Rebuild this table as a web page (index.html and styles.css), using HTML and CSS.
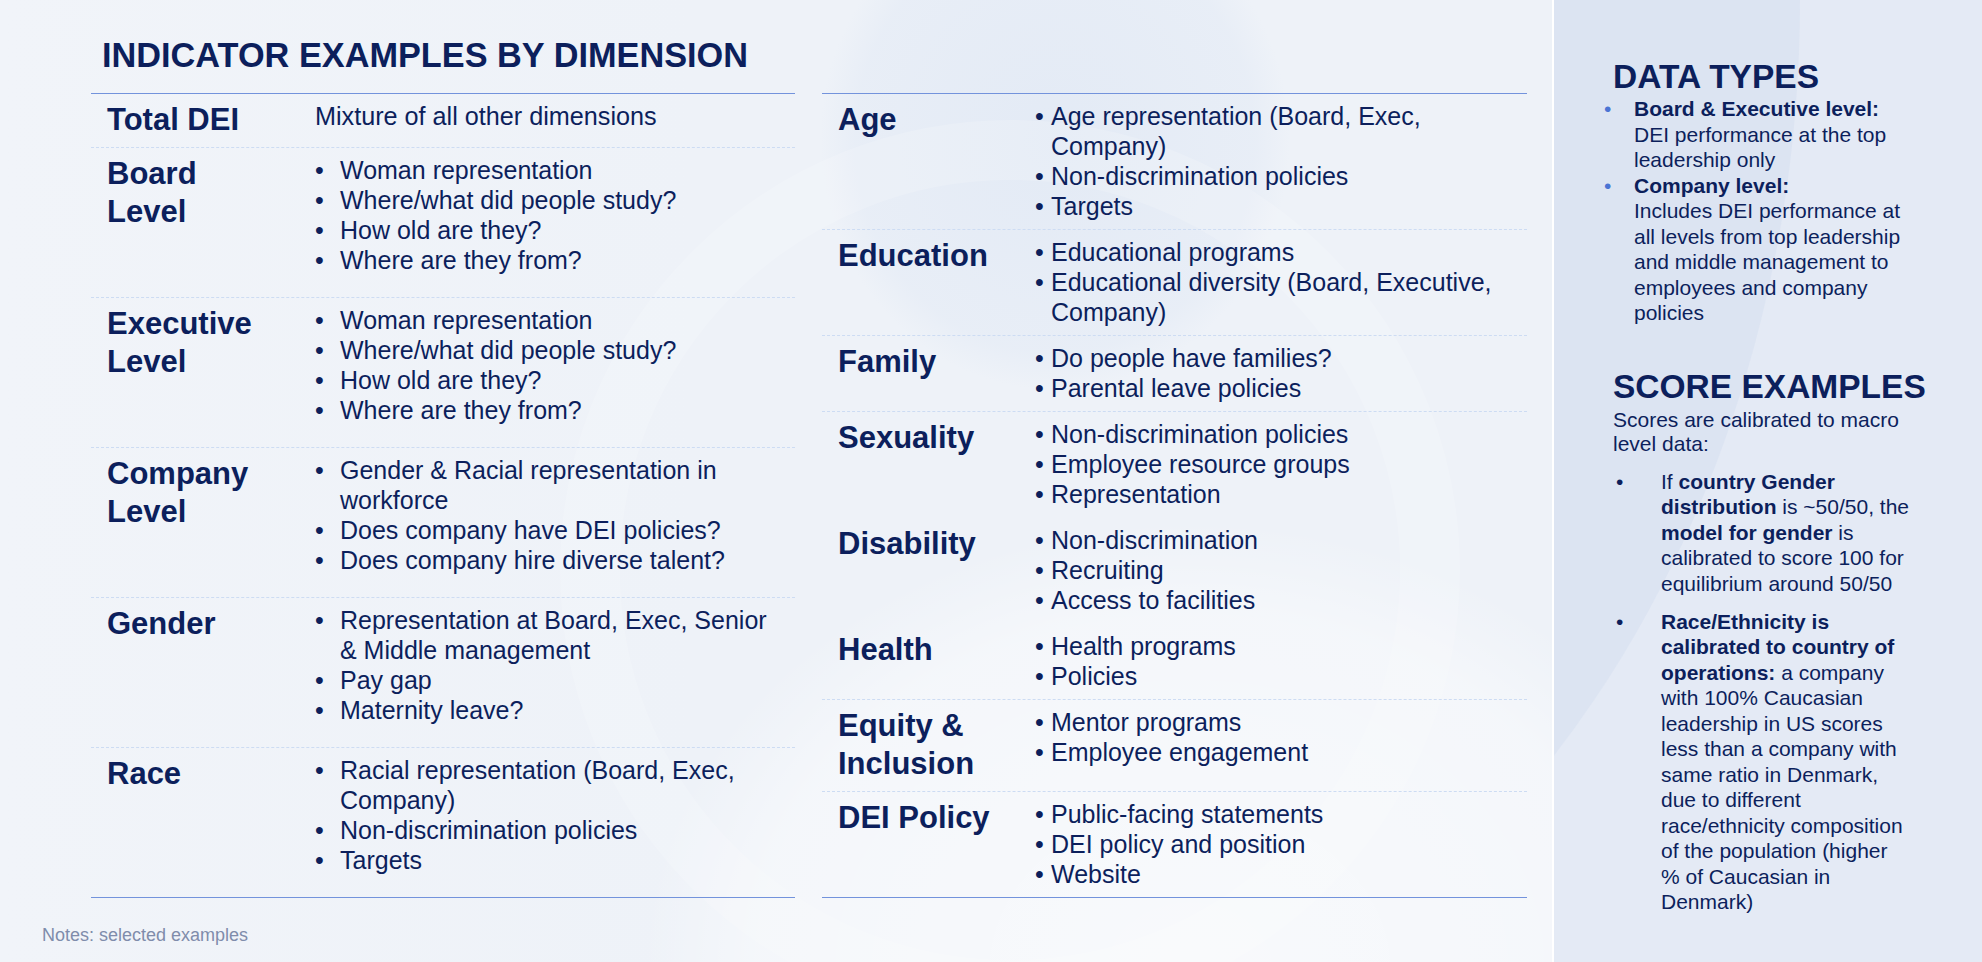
FILE: index.html
```html
<!DOCTYPE html>
<html lang="en">
<head>
<meta charset="utf-8">
<title>Indicator examples by dimension</title>
<link rel="stylesheet" href="styles.css">
</head>
<body>
<div class="slide">
  <main class="main">
    <div class="deco deco-disc"></div>
    <div class="deco deco-light"></div>
    <div class="deco deco-ring"></div>
    <h1 class="title">INDICATOR EXAMPLES BY DIMENSION</h1>
    <div class="tables">
      <div class="table table-left">
        <div class="row row-first">
          <div class="label">Total DEI</div>
          <div class="desc">Mixture of all other dimensions</div>
        </div>
        <div class="row">
          <div class="label">Board<br>Level</div>
          <ul class="bullets">
            <li>Woman representation</li>
            <li>Where/what did people study?</li>
            <li>How old are they?</li>
            <li>Where are they from?</li>
          </ul>
        </div>
        <div class="row">
          <div class="label">Executive<br>Level</div>
          <ul class="bullets">
            <li>Woman representation</li>
            <li>Where/what did people study?</li>
            <li>How old are they?</li>
            <li>Where are they from?</li>
          </ul>
        </div>
        <div class="row">
          <div class="label">Company<br>Level</div>
          <ul class="bullets">
            <li>Gender &amp; Racial representation in workforce</li>
            <li>Does company have DEI policies?</li>
            <li>Does company hire diverse talent?</li>
          </ul>
        </div>
        <div class="row">
          <div class="label">Gender</div>
          <ul class="bullets">
            <li>Representation at Board, Exec, Senior &amp; Middle management</li>
            <li>Pay gap</li>
            <li>Maternity leave?</li>
          </ul>
        </div>
        <div class="row">
          <div class="label">Race</div>
          <ul class="bullets">
            <li>Racial representation (Board, Exec, Company)</li>
            <li>Non-discrimination policies</li>
            <li>Targets</li>
          </ul>
        </div>
      </div>

      <div class="table table-right">
        <div class="row">
          <div class="label">Age</div>
          <ul class="bullets">
            <li>Age representation (Board, Exec, Company)</li>
            <li>Non-discrimination policies</li>
            <li>Targets</li>
          </ul>
        </div>
        <div class="row">
          <div class="label">Education</div>
          <ul class="bullets">
            <li>Educational programs</li>
            <li>Educational diversity (Board, Executive, Company)</li>
          </ul>
        </div>
        <div class="row">
          <div class="label">Family</div>
          <ul class="bullets">
            <li>Do people have families?</li>
            <li>Parental leave policies</li>
          </ul>
        </div>
        <div class="row">
          <div class="label">Sexuality</div>
          <ul class="bullets">
            <li>Non-discrimination policies</li>
            <li>Employee resource groups</li>
            <li>Representation</li>
          </ul>
        </div>
        <div class="row row-plain">
          <div class="label">Disability</div>
          <ul class="bullets">
            <li>Non-discrimination</li>
            <li>Recruiting</li>
            <li>Access to facilities</li>
          </ul>
        </div>
        <div class="row row-plain">
          <div class="label">Health</div>
          <ul class="bullets">
            <li>Health programs</li>
            <li>Policies</li>
          </ul>
        </div>
        <div class="row">
          <div class="label">Equity &amp;<br>Inclusion</div>
          <ul class="bullets">
            <li>Mentor programs</li>
            <li>Employee engagement</li>
          </ul>
        </div>
        <div class="row">
          <div class="label">DEI Policy</div>
          <ul class="bullets">
            <li>Public-facing statements</li>
            <li>DEI policy and position</li>
            <li>Website</li>
          </ul>
        </div>
      </div>
    </div>
    <p class="notes">Notes: selected examples</p>
  </main>

  <aside class="panel">
    <div class="deco panel-curve"></div>
    <h2 class="panel-title">DATA TYPES</h2>
    <ul class="types">
      <li><div><b>Board &amp; Executive level:</b><br>DEI performance at the top leadership only</div></li>
      <li><div><b>Company level:</b><br>Includes DEI performance at all levels from top leadership and middle management to employees and company policies</div></li>
    </ul>
    <h2 class="panel-title score-title">SCORE EXAMPLES</h2>
    <p class="score-intro">Scores are calibrated to macro level data:</p>
    <ul class="scores">
      <li><div>If <b>country Gender</b> <b>distribution</b> is ~50/50, the <b>model for gender</b> is calibrated to score 100 for equilibrium around 50/50</div></li>
      <li><div><b>Race/Ethnicity is</b> <b>calibrated to country of</b> <b>operations:</b> a company with 100% Caucasian leadership in US scores less than a company with same ratio in Denmark, due to different race/ethnicity composition of the population (higher<br>% of Caucasian in Denmark)</div></li>
    </ul>
  </aside>
</div>
</body>
</html>
```

FILE: styles.css
```css
html, body {
  margin: 0;
  padding: 0;
}

body {
  background: #eef2f8;
  font-family: "Liberation Sans", Arial, Helvetica, sans-serif;
  color: #0c1f5c;
}

.slide {
  position: relative;
  width: 1982px;
  height: 962px;
  overflow: hidden;
  display: flex;
  background: linear-gradient(90deg, #f1f4f9 0%, #eef2f8 35%, #eef2f8 100%);
}

/* ---------- decorative background shapes ---------- */
.deco {
  position: absolute;
  pointer-events: none;
  border-radius: 50%;
}

.deco-disc {
  left: 820px;
  top: -110px;
  width: 470px;
  height: 500px;
  background: radial-gradient(closest-side, rgba(214, 225, 242, 0.45), rgba(214, 225, 242, 0.25) 85%, rgba(214, 225, 242, 0) 100%);
}

.deco-light {
  left: 640px;
  top: 520px;
  width: 1100px;
  height: 900px;
  background: radial-gradient(closest-side, rgba(255, 255, 255, 0.6), rgba(255, 255, 255, 0.38) 80%, rgba(255, 255, 255, 0) 100%);
}

.deco-ring {
  left: 560px;
  top: 120px;
  width: 900px;
  height: 900px;
  border: 60px solid rgba(255, 255, 255, 0.16);
  box-sizing: border-box;
}

.panel-curve {
  left: -1554px;
  top: -1100px;
  width: 1800px;
  height: 2200px;
  background: rgba(205, 217, 238, 0.35);
}

/* ---------- main area ---------- */
.main {
  position: relative;
  width: 1552px;
  flex: none;
  box-sizing: border-box;
  padding: 35px 0 0 42px;
}

.title {
  position: relative;
  margin: 0 0 0 60px;
  font-size: 34.3px;
  line-height: 40px;
  font-weight: bold;
}

.tables {
  position: relative;
  display: flex;
  align-items: flex-start;
  gap: 27px;
  margin: 18px 0 0 49px;
}

.table {
  border-top: 1px solid #7393dc;
  border-bottom: 1px solid #7393dc;
}

.table-left {
  width: 704px;
}

.table-right {
  width: 705px;
}

.row {
  display: flex;
  align-items: flex-start;
  border-top: 1px dashed #cddcf3;
}

.row:first-child {
  border-top: none;
}

.table-left .row {
  padding: 7px 15px 22px 16px;
}

.table-left .row-first {
  padding-bottom: 8px;
}

.table-right .row {
  padding: 7px 17px 8px 16px;
}

.table-right .row-plain {
  border-top-color: transparent;
}

.label {
  flex: none;
  font-size: 31px;
  line-height: 38px;
  font-weight: bold;
}

.table-left .label {
  width: 208px;
}

.table-right .label {
  width: 197px;
}

.desc {
  font-size: 25.2px;
  line-height: 30px;
}

.bullets {
  flex: 1;
  list-style: none;
  margin: 0;
  padding: 0;
  font-size: 25px;
  line-height: 30px;
}

.bullets li {
  display: flex;
  align-items: baseline;
}

.bullets li::before {
  content: "\2022";
  flex: none;
}

.table-left .bullets li::before {
  width: 25px;
}

.table-right .bullets li::before {
  width: 16px;
}

.notes {
  position: relative;
  margin: 27px 0 0;
  font-size: 18px;
  line-height: 21px;
  color: #7f8cab;
}

/* ---------- right panel ---------- */
.panel {
  position: relative;
  flex: 1;
  overflow: hidden;
  border-left: 2px solid #ffffff;
  background: #e4eaf5;
  padding: 57px 70px 0 59px;
  font-size: 21px;
  line-height: 25.5px;
}

.panel-title {
  position: relative;
  margin: 0 -40px 0 0;
  font-size: 33.5px;
  line-height: 40px;
  font-weight: bold;
  white-space: nowrap;
}

.types {
  position: relative;
  list-style: none;
  margin: -1px 0 0 -9px;
  padding: 0;
}

.types li,
.scores li {
  display: flex;
  align-items: baseline;
}

.types li::before {
  content: "\2022";
  flex: none;
  width: 30px;
  color: #4b74d4;
}

.score-title {
  margin-top: 41px;
}

.score-intro {
  position: relative;
  margin: 1px 0 0;
  line-height: 24px;
}

.scores {
  position: relative;
  list-style: none;
  margin: 13px 0 0;
  padding: 0 1px 0 3px;
}

.scores li + li {
  margin-top: 12.5px;
}

.scores li::before {
  content: "\2022";
  flex: none;
  width: 45px;
}
```
